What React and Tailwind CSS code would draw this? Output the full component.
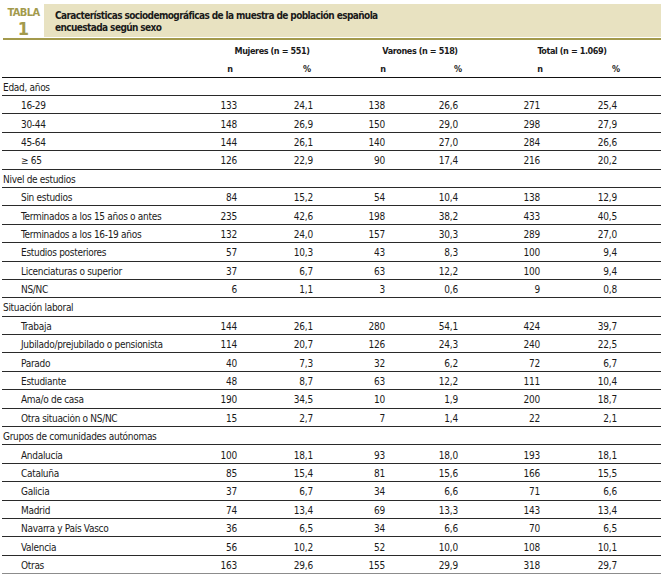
import React from "react";

const sections = [
  {
    title: "Edad, años",
    rows: [
      ["16-29", "133", "24,1", "138", "26,6", "271", "25,4"],
      ["30-44", "148", "26,9", "150", "29,0", "298", "27,9"],
      ["45-64", "144", "26,1", "140", "27,0", "284", "26,6"],
      ["≥ 65", "126", "22,9", "90", "17,4", "216", "20,2"],
    ],
  },
  {
    title: "Nivel de estudios",
    rows: [
      ["Sin estudios", "84", "15,2", "54", "10,4", "138", "12,9"],
      ["Terminados a los 15 años o antes", "235", "42,6", "198", "38,2", "433", "40,5"],
      ["Terminados a los 16-19 años", "132", "24,0", "157", "30,3", "289", "27,0"],
      ["Estudios posteriores", "57", "10,3", "43", "8,3", "100", "9,4"],
      ["Licenciaturas o superior", "37", "6,7", "63", "12,2", "100", "9,4"],
      ["NS/NC", "6", "1,1", "3", "0,6", "9", "0,8"],
    ],
  },
  {
    title: "Situación laboral",
    rows: [
      ["Trabaja", "144", "26,1", "280", "54,1", "424", "39,7"],
      ["Jubilado/prejubilado o pensionista", "114", "20,7", "126", "24,3", "240", "22,5"],
      ["Parado", "40", "7,3", "32", "6,2", "72", "6,7"],
      ["Estudiante", "48", "8,7", "63", "12,2", "111", "10,4"],
      ["Ama/o de casa", "190", "34,5", "10", "1,9", "200", "18,7"],
      ["Otra situación o NS/NC", "15", "2,7", "7", "1,4", "22", "2,1"],
    ],
  },
  {
    title: "Grupos de comunidades autónomas",
    rows: [
      ["Andalucía", "100", "18,1", "93", "18,0", "193", "18,1"],
      ["Cataluña", "85", "15,4", "81", "15,6", "166", "15,5"],
      ["Galicia", "37", "6,7", "34", "6,6", "71", "6,6"],
      ["Madrid", "74", "13,4", "69", "13,3", "143", "13,4"],
      ["Navarra y País Vasco", "36", "6,5", "34", "6,6", "70", "6,5"],
      ["Valencia", "56", "10,2", "52", "10,0", "108", "10,1"],
      ["Otras", "163", "29,6", "155", "29,9", "318", "29,7"],
    ],
  },
];

// right edges of the number columns: 237, 313, 385, 458, 540, 617
const cellWidths = ["w-[42px]", "w-[76px]", "w-[72px]", "w-[73px]", "w-[82px]", "w-[77px]"];

function DataRow({ row, last }) {
  return (
    <div
      className={
        "flex items-center h-[18.4px] pt-[3px] border-b " +
        (last ? "border-[#8c8c8c]" : "border-[#2a2a2a]")
      }
    >
      <div className="w-[193px] pl-[19px] truncate">{row[0]}</div>
      {row.slice(1).map((v, i) => (
        <div key={i} className={cellWidths[i] + " text-right tracking-[-0.2px]"}>
          {v}
        </div>
      ))}
    </div>
  );
}

export default function App() {
  return (
    <div className="w-[666px] h-[581px] bg-white text-[#1a1a1a] font-['Liberation_Sans_Narrow','DejaVu_Sans_Condensed','Liberation_Sans',sans-serif] [font-stretch:condensed]">
      <div className="flex ml-[3px] w-[658px] pt-[4px] border-b-2 border-[#a39a4c]">
        <div className="w-[41px] flex flex-col items-center text-[#a39a4c] font-bold leading-none">
          <span className="text-[11px] mt-[3px] tracking-[-0.6px]">TABLA</span>
          <span className="text-[18px] mt-[2px]">1</span>
        </div>
        <div className="flex-1 h-[33px] bg-[#e8e2c1] pl-[11px] pt-[6px] text-[10px] leading-[12px] font-bold tracking-[-0.6px] text-[#1a1a1a]">
          Características sociodemográficas de la muestra de población española
          <br />
          encuestada según sexo
        </div>
      </div>

      <div className="ml-[2px] w-[659px] text-[10px] leading-none tracking-[-0.3px]">
        <div className="flex items-center h-[20px] pt-[3px] font-bold text-[9px] tracking-[-0.4px]">
          <div className="ml-[220px] w-[100px] text-center">Mujeres (n = 551)</div>
          <div className="ml-[48px] w-[100px] text-center">Varones (n = 518)</div>
          <div className="ml-[52px] w-[100px] text-center">Total (n = 1.069)</div>
        </div>
        <div className="flex items-center h-[17.6px] pt-[2px] font-bold text-[9px] border-b-[1.5px] border-[#111]">
          <div className="ml-[208px] w-[40px] text-center">n</div>
          <div className="ml-[37px] w-[40px] text-center">%</div>
          <div className="ml-[36px] w-[40px] text-center">n</div>
          <div className="ml-[35px] w-[40px] text-center">%</div>
          <div className="ml-[42px] w-[40px] text-center">n</div>
          <div className="ml-[36px] w-[40px] text-center">%</div>
        </div>

        {sections.map((s, si) => (
          <div key={s.title}>
            <div className="flex items-center h-[18.4px] pt-[3px] border-b border-[#2a2a2a] pl-[1px]">
              {s.title}
            </div>
            {s.rows.map((r, ri) => (
              <DataRow
                key={r[0]}
                row={r}
                last={si === sections.length - 1 && ri === s.rows.length - 1}
              />
            ))}
          </div>
        ))}
      </div>
    </div>
  );
}
